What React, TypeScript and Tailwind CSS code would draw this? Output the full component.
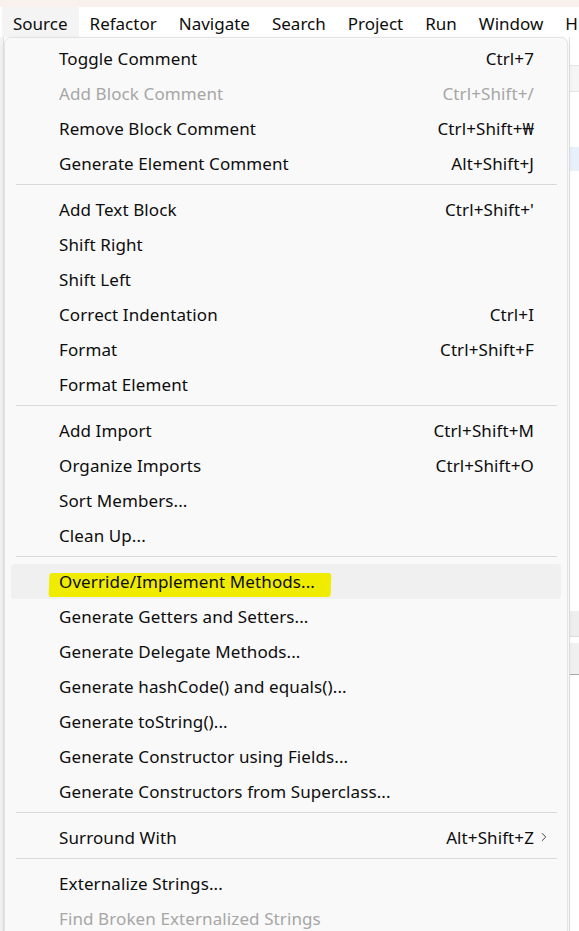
import { ChevronRight } from 'lucide-react';

type Item = { label: string; keys?: string; disabled?: boolean; sub?: boolean; marked?: boolean };

const GROUPS: Item[][] = [
  [
    { label: 'Toggle Comment', keys: 'Ctrl+7' },
    { label: 'Add Block Comment', keys: 'Ctrl+Shift+/', disabled: true },
    { label: 'Remove Block Comment', keys: 'Ctrl+Shift+₩' },
    { label: 'Generate Element Comment', keys: 'Alt+Shift+J' },
  ],
  [
    { label: 'Add Text Block', keys: "Ctrl+Shift+'" },
    { label: 'Shift Right' },
    { label: 'Shift Left' },
    { label: 'Correct Indentation', keys: 'Ctrl+I' },
    { label: 'Format', keys: 'Ctrl+Shift+F' },
    { label: 'Format Element' },
  ],
  [
    { label: 'Add Import', keys: 'Ctrl+Shift+M' },
    { label: 'Organize Imports', keys: 'Ctrl+Shift+O' },
    { label: 'Sort Members...' },
    { label: 'Clean Up...' },
  ],
  [
    { label: 'Override/Implement Methods...', marked: true },
    { label: 'Generate Getters and Setters...' },
    { label: 'Generate Delegate Methods...' },
    { label: 'Generate hashCode() and equals()...' },
    { label: 'Generate toString()...' },
    { label: 'Generate Constructor using Fields...' },
    { label: 'Generate Constructors from Superclass...' },
  ],
  [{ label: 'Surround With', keys: 'Alt+Shift+Z', sub: true }],
  [
    { label: 'Externalize Strings...' },
    { label: 'Find Broken Externalized Strings', disabled: true },
  ],
];

const MENUS = ['Source', 'Refactor', 'Navigate', 'Search', 'Project', 'Run', 'Window', 'H'];

function Row({ item }: { item: Item }) {
  return (
    <div
      className={`relative flex h-[35px] items-center rounded-[4px] pl-[48px] pr-[27px] tracking-[0.1px] ${
        item.marked ? 'bg-[#f0f0f0]' : ''
      } ${item.disabled ? 'text-[#a6a6a6]' : 'text-[#0d0d0d]'}`}
    >
      {item.marked && (
        <span className="absolute left-[38px] top-[9px] h-[24px] w-[282px] -skew-x-2 rounded-[3px] bg-[#f0ec00]" />
      )}
      <span className="relative flex-1 whitespace-nowrap">{item.label}</span>
      {item.keys && <span className="relative whitespace-nowrap">{item.keys}</span>}
      {item.sub && (
        <ChevronRight className="absolute right-[10px] top-[10px] h-[14px] w-[14px] text-[#333]" strokeWidth={1.6} />
      )}
    </div>
  );
}

export default function App() {
  return (
    <div className="relative h-[931px] w-[579px] overflow-hidden bg-white font-['Noto_Sans',sans-serif] text-[17px]">
      {/* title bar strip */}
      <div className="h-[7px] bg-[#f8f1ee]" />

      {/* menubar */}
      <div className="flex h-[30px] items-center bg-white pt-[3px] text-[#0d0d0d]">
        <div className="-mt-[3px] ml-[2px] flex h-[30px] items-center bg-[#f4f4f4] px-[11px] pt-[3px]">Source</div>
        {MENUS.slice(1).map((m) => (
          <div key={m} className="px-[11px]">
            {m}
          </div>
        ))}
      </div>

      {/* editor behind */}
      <div className="flex h-full">
        <div className="w-[4px] border-r border-[#e2e2e2] bg-[#f3f3f3]" />
        <div className="flex-1" />
        <div className="flex w-[10px] flex-col border-l border-[#e2e2e2] bg-white text-[14px]">
          <div className="mt-[28px] h-[27px] border-y border-[#e6e6e6] bg-[#f5f5f5]" />
          <div className="mt-[55px] h-[24px] bg-[#e8f0fb]" />
          <div className="mt-[440px] h-[26px] border-b border-[#dcdcdc] bg-[#eeeeee]" />
          <div className="mt-[6px] h-[32px] border-b border-[#aaaaaa] bg-[#f0f0f0]" />
        </div>
      </div>

      {/* dropdown */}
      <div className="absolute left-[4px] top-[37px] w-[564px] rounded-[7px] border border-[#e3e3e3] bg-[#f9f9f9] px-[6px] pt-[3px] shadow-[0_2px_6px_rgba(0,0,0,0.08)]">
        {GROUPS.map((g, gi) => (
          <div key={gi}>
            {gi > 0 && (
              <div className="pb-[7px] pl-[5px] pr-[4px] pt-[3px]">
                <div className="h-px bg-[#d9d9d9]" />
              </div>
            )}
            {g.map((it) => (
              <Row key={it.label} item={it} />
            ))}
          </div>
        ))}
      </div>
    </div>
  );
}
